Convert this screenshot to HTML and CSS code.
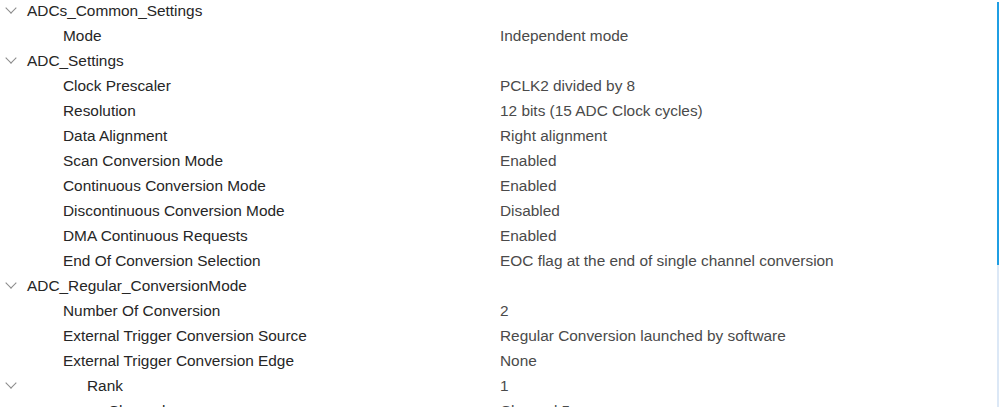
FILE: index.html
```html
<!DOCTYPE html>
<html>
<head>
	<meta charset="UTF-8">
	<title>ADC Parameter Settings</title>
	<link rel="stylesheet" href="styles.css">
</head>
<body>
	<div class="tree">
		<div class="row group"><span class="name"><i class="chev"></i>ADCs_Common_Settings</span><span class="value"></span></div>
		<div class="row"><span class="name lv1">Mode</span><span class="value">Independent mode</span></div>
		<div class="row group"><span class="name"><i class="chev"></i>ADC_Settings</span><span class="value"></span></div>
		<div class="row"><span class="name lv1">Clock Prescaler</span><span class="value">PCLK2 divided by 8</span></div>
		<div class="row"><span class="name lv1">Resolution</span><span class="value">12 bits (15 ADC Clock cycles)</span></div>
		<div class="row"><span class="name lv1">Data Alignment</span><span class="value">Right alignment</span></div>
		<div class="row"><span class="name lv1">Scan Conversion Mode</span><span class="value">Enabled</span></div>
		<div class="row"><span class="name lv1">Continuous Conversion Mode</span><span class="value">Enabled</span></div>
		<div class="row"><span class="name lv1">Discontinuous Conversion Mode</span><span class="value">Disabled</span></div>
		<div class="row"><span class="name lv1">DMA Continuous Requests</span><span class="value">Enabled</span></div>
		<div class="row"><span class="name lv1">End Of Conversion Selection</span><span class="value">EOC flag at the end of single channel conversion</span></div>
		<div class="row group"><span class="name"><i class="chev"></i>ADC_Regular_ConversionMode</span><span class="value"></span></div>
		<div class="row"><span class="name lv1">Number Of Conversion</span><span class="value">2</span></div>
		<div class="row"><span class="name lv1">External Trigger Conversion Source</span><span class="value">Regular Conversion launched by software</span></div>
		<div class="row"><span class="name lv1">External Trigger Conversion Edge</span><span class="value">None</span></div>
		<div class="row group"><span class="name"><i class="chev"></i><span class="lv2">Rank</span></span><span class="value">1</span></div>
		<div class="row"><span class="name lv3">Channel</span><span class="value">Channel 5</span></div>
	</div>
	<div class="scroll"><div class="thumb"></div></div>
</body>
</html>
```

FILE: styles.css
```css
html, body {
    margin: 0;
    height: 100%;
    overflow: hidden;
    background: #fff;
}
body {
    font-family: "Liberation Sans", Arial, sans-serif;
    font-size: 15.4px;
    color: #333;
}
.tree {
    margin-top: -2px;
}
.row {
    display: flex;
    height: 25px;
    line-height: 25px;
    white-space: nowrap;
}
.name {
    width: 500px;
    flex: none;
    padding-left: 5px;
    box-sizing: border-box;
    display: flex;
    align-items: center;
    color: #262626;
}
.name.lv1 { padding-left: 63px; }
.name.lv3 { padding-left: 108px; }
.lv2 { padding-left: 60px; }
.value {
    color: #4a4a4a;
}
.chev {
    width: 7px; height: 7px;
    border-right: 1px solid #8a8a8a;
    border-bottom: 1px solid #8a8a8a;
    transform: rotate(45deg);
    margin: -5px 12px 0 2px;
}
.scroll {
    position: absolute;
    top: 2px; right: 0;
    width: 2px; bottom: 0;
    background: #dce8f6;
}
.thumb {
    height: 263px;
    background: #1f9ee3;
}
```
